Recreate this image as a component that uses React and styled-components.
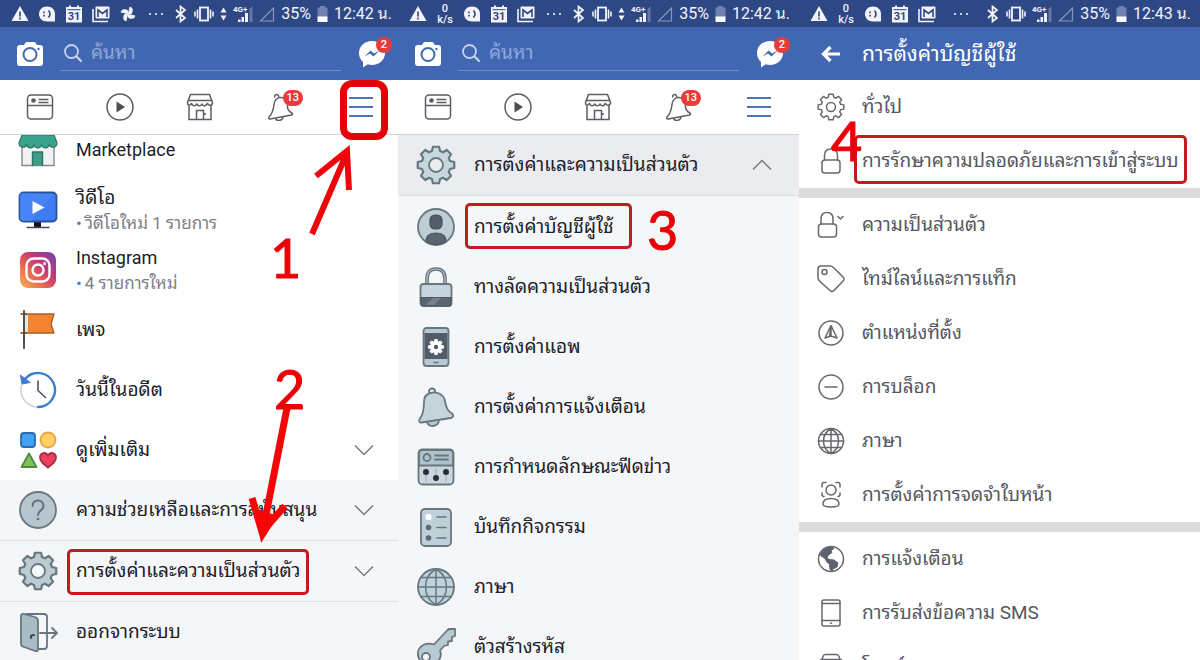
import React from 'react';
import styled, { createGlobalStyle } from 'styled-components';

const GlobalStyle = createGlobalStyle`
  * {
    box-sizing: border-box;
  }

  body {
    margin: 0;
    background: #fff;
    font-family: Roboto, "Noto Sans Thai Looped", "Noto Looped Thai", Loma, Waree, Garuda, "Noto Sans Thai", sans-serif;
  }

  button, input {
    font-family: inherit;
  }
`;

const Stage = styled.main`
  display: flex;
  height: 100vh;
  overflow: hidden;
`;

const Screen = styled.section`
  position: relative;
  flex: 1 1 0;
  min-width: 0;
  overflow: hidden;
  background: ${(props) => props.$background || '#fff'};

  &:first-child {
    margin-right: -3px; /* the second screen overlaps the first */
  }
`;

const StatusBar = styled.div`
  display: flex;
  align-items: center;
  height: 27px;
  padding: 0 9px 0 11px;
  background: #2e4785;
  color: #f2f4fa;
  font-size: 16px;
  line-height: 20px;
  white-space: nowrap;
`;

const StatusGroup = styled.div`
  display: flex;
  align-items: center;
  gap: ${(props) => props.$gap}px;
  margin-left: ${(props) => (props.$end ? 'auto' : '0')};

  svg {
    flex: none;
  }
`;

const Speed = styled.span`
  width: 18px;
  text-align: center;
  font-size: 11px;
  font-weight: 500;
  line-height: 11px;
`;

const Header = styled.header`
  display: flex;
  align-items: center;
  gap: 16px;
  height: 53px;
  padding: 0 14px 0 16px;
  background: #4267b2;
`;

const IconButton = styled.button`
  position: relative;
  display: flex;
  align-items: center;
  justify-content: center;
  padding: 0;
  border: 0;
  background: none;
  cursor: pointer;
`;

const SearchBox = styled.label`
  display: flex;
  flex: 1;
  align-items: center;
  gap: 8px;
  min-width: 0;
  height: 34px;
  padding-left: 3px;
  border-bottom: 1px solid #6f8ccb;
`;

const SearchInput = styled.input`
  flex: 1;
  min-width: 0;
  padding: 0;
  border: 0;
  outline: 0;
  background: none;
  color: #fff;
  font-size: 19px;
  line-height: 28px;

  &::placeholder {
    color: #8fa7dc;
    opacity: 1;
  }
`;

const Title = styled.h1`
  margin: 0;
  color: #fff;
  font-size: 21px;
  font-weight: 400;
  line-height: 32px;
  white-space: nowrap;
`;

const TitleHeader = styled(Header)`
  display: grid;
  grid-template-columns: 63px 1fr;
  gap: 0;
  padding: 0;
`;

const Badge = styled.span`
  position: absolute;
  top: ${(props) => props.$top}px;
  left: ${(props) => props.$left}px;
  min-width: 16px;
  height: 16px;
  padding: 0 4px;
  border-radius: 8px;
  background: #ea3b3b;
  color: #fff;
  font-size: 11px;
  font-weight: 500;
  line-height: 16px;
  text-align: center;
`;

const Tabs = styled.nav`
  position: relative;
  z-index: 1;
  display: grid;
  grid-template-columns: repeat(5, 1fr);
  height: 55px;
  border-bottom: 1px solid #cfd1d6;
  background: #fff;
`;

const List = styled.ul`
  margin: 0;
  padding: 0;
  list-style: none;
`;

/* scrolled so that the first entry slides under the tab bar */
const ScrolledList = styled(List)`
  margin-top: -15px;
`;

const SubList = styled(List)`
  padding-top: 1px;
`;

const MenuRow = styled.button`
  display: grid;
  grid-template-columns: 76px 1fr 74px;
  align-items: center;
  width: 100%;
  height: ${(props) => (props.$lined ? '61px' : '60px')};
  padding: 0;
  border: 0;
  border-bottom: ${(props) => (props.$lined ? '1px solid #dfe0e3' : '0')};
  background: ${(props) => props.$background || 'transparent'};
  color: #1d2129;
  font-size: ${(props) => (props.$latin ? '18px' : '19px')};
  line-height: 26px;
  text-align: left;
  white-space: nowrap;
  cursor: pointer;

  > svg {
    justify-self: center;
  }
`;

const Note = styled.span`
  display: block;
  color: #7d8087;
  font-size: 17px;
  line-height: 24px;

  &::before {
    content: '•';
    margin-right: 3px;
    color: #3f7fc6;
  }
`;

const SettingRow = styled.button`
  display: grid;
  grid-template-columns: 63px 1fr;
  align-items: center;
  width: 100%;
  height: 54px;
  padding: 0;
  border: 0;
  background: none;
  color: #55585f;
  font-size: 19px;
  line-height: 26px;
  text-align: left;
  white-space: nowrap;
  cursor: pointer;

  > svg {
    justify-self: center;
  }
`;

const Separator = styled.div`
  height: 10px;
  background: #dcdcde;
`;

/* tutorial marks, drawn over the screens */
const Frame = styled.div`
  position: absolute;
  z-index: 2;
  left: ${(props) => props.$x}px;
  top: ${(props) => props.$y}px;
  width: ${(props) => props.$w}px;
  height: ${(props) => props.$h}px;
  border: ${(props) => (props.$bold ? '7px solid #e60008' : '3px solid #c31c20')};
  border-radius: ${(props) => (props.$bold ? '12px' : '5px')};
  pointer-events: none;
`;

const Step = styled.span`
  position: absolute;
  z-index: 2;
  left: ${(props) => props.$x}px;
  top: ${(props) => props.$y}px;
  color: #ec0006;
  font-family: Lato, sans-serif;
  font-size: 54px;
  line-height: 60px;
  -webkit-text-stroke: 1px #ec0006;
  pointer-events: none;
`;

const Arrow = styled.svg`
  position: absolute;
  z-index: 2;
  left: ${(props) => props.$x}px;
  top: ${(props) => props.$y}px;
  pointer-events: none;
`;

const gear = (c, outer, inner, teeth = 8) => {
  const half = Math.PI / teeth;
  const points = [];
  for (let i = 0; i < teeth; i += 1) {
    const a = i * 2 * half - Math.PI / 2;
    [[inner, -0.72], [outer, -0.42], [outer, 0.42], [inner, 0.72]].forEach(([r, k]) => {
      points.push(`${(c + r * Math.cos(a + k * half)).toFixed(2)},${(c + r * Math.sin(a + k * half)).toFixed(2)}`);
    });
  }
  return points.join(' ');
};

// Filled icons of the menu, 40 x 40
const MenuIcon = ({ children }) => (
  <svg width="40" height="40" viewBox="0 0 40 40" fill="none" stroke="#66777f" strokeWidth="1.8" strokeLinecap="round" strokeLinejoin="round" aria-hidden="true">
    {children}
  </svg>
);

// Outlined icons of the settings list, 28 x 28
const LineIcon = ({ children }) => (
  <svg width="28" height="28" viewBox="0 0 28 28" fill="none" stroke="#66686e" strokeWidth="1.5" strokeLinecap="round" strokeLinejoin="round" aria-hidden="true">
    {children}
  </svg>
);

const StoreIcon = () => (
  <MenuIcon>
    <path d="M4 17v18.500h32V17" fill="#f0f2f4" stroke="#87888c" strokeWidth="1.400" />
    <path d="M14.500 35.500V22h10v13.500" fill="#3f9c88" stroke="#277565" strokeWidth="1.400" />
    <path d="M4 5h32l3 8c0 5-6.500 5.500-7.500 1.500-1.500 4.500-7 4.500-7.800 0-1.200 4.500-6.700 4.500-7.500 0-1 4.500-6.500 4.500-7.700 0C7.500 18.500 1 18 1 13z" fill="#3aa48b" stroke="#2c7767" strokeWidth="1.200" />
  </MenuIcon>
);

const TvIcon = () => (
  <MenuIcon>
    <path d="M16 31h7v6h-7z" fill="#111" stroke="none" />
    <path d="M9 37.500h22" stroke="#444b57" strokeWidth="1.400" />
    <rect x="1.500" y="2.500" width="37" height="29" rx="4" fill="#3d7cf3" stroke="#28539c" />
    <path d="M35 4L13 31H5q-3 0-3-3V6q0-3 3-3z" fill="#4f8bf8" stroke="none" opacity=".6" />
    <path d="M14.500 11l12 6.500-12 6.500z" fill="#fff" stroke="none" />
  </MenuIcon>
);

const InstagramIcon = () => (
  <MenuIcon>
    <defs>
      <linearGradient id="instagram" x1="0" y1="1" x2="1" y2="0">
        <stop offset="0" stopColor="#f6b65b" />
        <stop offset=".35" stopColor="#e9694c" />
        <stop offset=".6" stopColor="#c83a78" />
        <stop offset="1" stopColor="#6f42ae" />
      </linearGradient>
    </defs>
    <rect x="2" y="2" width="36" height="36" rx="8" fill="url(#instagram)" stroke="none" />
    <rect x="8.500" y="8.500" width="23" height="23" rx="7" stroke="#fff" strokeWidth="2.400" />
    <circle cx="20" cy="20" r="5.500" stroke="#fff" strokeWidth="2.400" />
    <circle cx="26.500" cy="13.500" r="1.500" fill="#fff" stroke="none" />
  </MenuIcon>
);

const FlagIcon = () => (
  <MenuIcon>
    <path d="M6 4h30l-3 10 3 9H6z" fill="#f48432" stroke="#a8622b" strokeWidth="1.400" />
    <path d="M6 5h4v17H6z" fill="#e8e4e1" stroke="none" />
    <path d="M6 1v37" stroke="#55504e" strokeWidth="2" />
    <path d="M3 4h5M3 23h5" stroke="#6b4a30" strokeWidth="1.600" />
  </MenuIcon>
);

const ClockIcon = () => (
  <MenuIcon>
    <circle cx="20" cy="20" r="17" fill="#fff" stroke="#ccd2da" strokeWidth="1.600" />
    <path d="M7 9a17 17 0 1 1 13 28" stroke="#3f7dd0" strokeWidth="2.400" />
    <path d="M2.500 5.500L4 14l8-1.500z" fill="#3f7dd0" stroke="#3f7dd0" strokeWidth="1" />
    <path d="M20 11v9.500l7.500 7" stroke="#4e5560" strokeWidth="1.600" />
  </MenuIcon>
);

const ShapesIcon = () => (
  <MenuIcon>
    <rect x="3" y="3" width="14" height="14" rx="3" fill="#43a1f5" stroke="#2b6baa" />
    <circle cx="30" cy="10" r="7.500" fill="#ffd063" stroke="#e8a646" />
    <path d="M11 23.500L18.500 37h-15z" fill="#7fc15c" stroke="#4e8a3c" />
    <path d="M30 37.500c-5-4-8-6.500-8-10 0-5 6-6 8-2 2-4 8-3 8 2 0 3.500-3 6-8 10z" fill="#f0405f" stroke="#a72d48" />
  </MenuIcon>
);

const HelpIcon = () => (
  <MenuIcon>
    <circle cx="20" cy="20" r="18" fill="#b7c6ce" />
    <path d="M14.500 16c0-7.500 11-7.500 11 0 0 4.500-5.500 4-5.500 9" stroke="#5f7079" strokeWidth="2" />
    <circle cx="20" cy="29" r="1.300" fill="#5f7079" stroke="none" />
  </MenuIcon>
);

const GearIcon = ({ light }) => (
  <MenuIcon>
    <polygon points={gear(20, 18.5, 14.5)} fill={light ? '#c7d8dc' : '#bccad2'} strokeWidth="2.200" />
    <circle cx="20" cy="20" r="7" fill={light ? '#ebecf0' : '#f5f6f7'} />
  </MenuIcon>
);

const DoorIcon = () => (
  <MenuIcon>
    <path d="M8 2h18q3 0 3 3v29q0 3-3 3H16" />
    <path d="M3 4q0-2.500 3-2l11 3q3 1 3 4v28q0 3-3 2L6 35q-3-1-3-3z" fill="#a9bbc5" />
    <path d="M22 21h17M34 16l5 5-5 5" />
    <path d="M13 26q-1-3 3-3" stroke="#39434a" strokeWidth="2" />
  </MenuIcon>
);

const AccountIcon = () => (
  <MenuIcon>
    <circle cx="20" cy="20" r="18" fill="#bccdd4" />
    <path d="M10 34.500c0-6 4-8.500 10-8.500s10 2.500 10 8.500a18 18 0 0 1-20 0z" fill="#5b6470" stroke="#4d5863" strokeWidth="1.200" />
    <rect x="14" y="8" width="12" height="14" rx="5" fill="#545e69" stroke="#424e58" strokeWidth="1.200" />
  </MenuIcon>
);

const PadlockIcon = () => (
  <MenuIcon>
    <path d="M11 18v-6q0-10 9-10t9 10v6" stroke="#5f7079" strokeWidth="3.600" />
    <path d="M11 18v-6q0-10 9-10t9 10v6" stroke="#b9c7cf" strokeWidth="1.200" />
    <rect x="4.500" y="17" width="31" height="22" rx="3" fill="#c7d3dd" />
    <path d="M5 30.500h30V36q0 3-3 3H8q-3 0-3-3z" fill="#5b6470" stroke="#4d5863" strokeWidth="1.200" />
    <path d="M17 31h8l-7 7h-8z" fill="#77818c" stroke="none" />
  </MenuIcon>
);

const AppIcon = () => (
  <MenuIcon>
    <rect x="7.500" y="1" width="25" height="38" rx="3" fill="#b9c9d2" />
    <path d="M8.500 6h23v26h-23z" fill="#535d69" stroke="none" />
    <polygon points={gear(20, 7.5, 5.6)} fill="#fff" stroke="#fff" strokeWidth="1" />
    <circle cx="20" cy="20" r="2.200" fill="#535d69" stroke="none" />
    <path d="M18 35.500h4" strokeWidth="1.500" />
  </MenuIcon>
);

const BellIcon = () => (
  <MenuIcon>
    <circle cx="16" cy="4.500" r="3" />
    <path d="M11 34.500c0 6.500 12 6 12-1.500" fill="#b9c9d2" />
    <path d="M8 15C8 8 12 6 17 5.500s11 2.500 12 8.500c1.200 7 2.500 10 7 12.500 2 1.200 1.500 4-1 4.500L5.500 35.500C3 36 2.500 33.500 4 31.500 7.500 27 8 22 8 15z" fill="#c5d3da" />
  </MenuIcon>
);

const FeedIcon = () => (
  <MenuIcon>
    <rect x="2.500" y="2.500" width="35" height="35" rx="4" fill="#cbd6dd" />
    <path d="M3 18.500V6q0-3 3-3h28q3 0 3 3v12.500z" fill="#b0c1ca" />
    <circle cx="11" cy="10.500" r="3.500" />
    <path d="M19 8.500h13M19 12.500h13" />
    <path d="M10 22v12M20 22v12M30 22v12" stroke="#93a3ac" strokeWidth="1" />
    <g fill="#262f38" stroke="none">
      <circle cx="10" cy="25" r="3" />
      <circle cx="20" cy="31" r="3" />
      <circle cx="30" cy="25" r="3" />
    </g>
  </MenuIcon>
);

const LogIcon = () => (
  <MenuIcon>
    <rect x="5" y="2" width="30" height="37" rx="4" fill="#c0d0d8" />
    <rect x="9.500" y="7" width="6" height="6" rx="2" fill="#fff" stroke="none" />
    <circle cx="12.500" cy="20.500" r="2.800" fill="#5b6b75" stroke="none" />
    <circle cx="12.500" cy="31" r="2.800" fill="#5b6b75" stroke="none" />
    <path d="M21 10h9M21 20.500h9M21 31h9" strokeWidth="1.600" />
  </MenuIcon>
);

const GlobeIcon = () => (
  <MenuIcon>
    <circle cx="20" cy="20" r="18" fill="#bfd2da" />
    <path d="M20 2v36M2 20h36M5 10.500h30M5 29.500h30M20 2c-14 8-14 28 0 36M20 2c14 8 14 28 0 36" strokeWidth="1.500" />
  </MenuIcon>
);

const KeyIcon = () => (
  <MenuIcon>
    <path d="M18 17.500L31.500 3q1-1 2.500-1h5v7l-3 1v4l-4 .5v3.500l-4 1-4 4.500c3 8-3 14-10 14C5 37.500 1 31 2 25s8-10 16-7.500z" fill="#b9c9d2" />
    <circle cx="10" cy="30" r="4" fill="#f5f6f7" />
  </MenuIcon>
);

const Chevron = ({ up }) => (
  <svg width="20" height="12" viewBox="0 0 20 12" fill="none" stroke="#777b83" strokeWidth="1.5" aria-hidden="true">
    <path d={up ? 'M1 10.500l9-9 9 9' : 'M1 1.500l9 9 9-9'} />
  </svg>
);

const LineGear = () => (
  <LineIcon>
    <polygon points={gear(14, 13, 10)} />
    <circle cx="14" cy="14" r="4.500" />
  </LineIcon>
);

const LineLock = () => (
  <LineIcon>
    <path d="M7.500 13V8.500C7.500 4 10 2 14 2s6.500 2 6.500 6.500V13" />
    <rect x="5" y="13" width="18" height="13" rx="3" />
  </LineIcon>
);

const LinePrivacy = () => (
  <LineIcon>
    <path d="M4 13V8c0-4 2-6.500 6-6.500S16 4 16 8v5" />
    <rect x="1.500" y="13" width="18" height="13" rx="3" />
    <path d="M21 5.500l2.500 2.500L26 5.500" />
  </LineIcon>
);

const LineTag = () => (
  <LineIcon>
    <path d="M1 4q0-3 3-3h9q2 0 3.500 1.500L26 12q2 2 0 4L17 25.500q-2 2-4 0L2.500 16Q1 14.500 1 12.500z" />
    <circle cx="7.500" cy="7" r="2.500" />
  </LineIcon>
);

const LineLocation = () => (
  <LineIcon>
    <circle cx="14" cy="14" r="12" />
    <path d="M14 6.500l6 12.500-6-2-6 2zM14 6.500V17M12.500 16.500l1.500-8" />
  </LineIcon>
);

const LineBlock = () => (
  <LineIcon>
    <circle cx="14" cy="14" r="12" />
    <path d="M8 14h12" />
  </LineIcon>
);

const LineGlobe = () => (
  <LineIcon>
    <circle cx="14" cy="14" r="12.500" />
    <path d="M14 1.500v25M1.500 14h25M3.500 7.500h21M3.500 20.500h21M14 1.500C4 7 4 21 14 26.500M14 1.500c10 5.500 10 19.500 0 25" />
  </LineIcon>
);

const LineFace = () => (
  <LineIcon>
    <path d="M5 6V3.500Q5 1.500 7 1.500h2M19 1.500h2q2 0 2 2V6M5 12v1.500q0 2 2 2M23 12v1.500q0 2-2 2" />
    <circle cx="14" cy="9" r="5" />
    <path d="M6 23c0-4 3-5.500 8-5.500s8 1.500 8 5.500c0 4-16 4-16 0z" />
  </LineIcon>
);

const LineEarth = () => (
  <LineIcon>
    <circle cx="14" cy="14" r="12.500" />
    <path d="M7 4l8-2.500 2 2-3 2 1 2-4 3-1 3 3 1 4 .5 4 3-1 4-4 2-1 2.500-2-2-.5-5-3-3-1.500-3-4-2.500-1-2z" fill="#5d616d" strokeWidth="1" />
  </LineIcon>
);

const LinePhone = () => (
  <LineIcon>
    <rect x="5" y="1" width="18" height="26" rx="2" />
    <path d="M5 4.500h18M5 21.500h18M13.500 24.200h1" />
  </LineIcon>
);

const LinePosts = () => (
  <LineIcon>
    <rect x="2.500" y="6.500" width="23" height="19" rx="3" fill="#dfe2ea" />
    <path d="M5 6.500l1-3Q6.500 1.500 8.500 1.500h11q2 0 2.500 2l1 3" />
  </LineIcon>
);

// Icons of the phone's own status bar
const StatusIcon = ({ children }) => (
  <svg width="18" height="18" viewBox="0 0 18 18" fill="#f2f4fa" aria-hidden="true">
    {children}
  </svg>
);

const WarningIcon = () => (
  <StatusIcon>
    <path d="M9 1l8.500 15H.5z" />
    <path d="M9 6.500v5M9 12.500v2" stroke="#2e4785" strokeWidth="1.600" />
  </StatusIcon>
);

const ChatIcon = () => (
  <StatusIcon>
    <path d="M9 1.500c5 0 8 3.300 8 7.500v7.500H9C4 16.500 1 13 1 9s3-7.500 8-7.500z" />
    <path d="M6 6.500v1.800M6 9.700v1.800M10.500 5.500q3 3.500 0 7" stroke="#2e4785" strokeWidth="1.600" fill="none" />
  </StatusIcon>
);

const CalendarIcon = () => (
  <StatusIcon>
    <path d="M1 2h3V.500h2V2h6V.500h2V2h3v15.500H1z" />
    <path d="M2.500 4.700h13" stroke="#2e4785" strokeWidth="1" />
    <text x="9" y="15" fill="#2e4785" fontSize="11" fontWeight="700" textAnchor="middle">31</text>
  </StatusIcon>
);

const MailIcon = () => (
  <StatusIcon>
    <path d="M1 4v12.500h15" fill="none" stroke="#f2f4fa" strokeWidth="1.600" />
    <rect x="3.500" y="1.500" width="14" height="12" rx="1" />
    <path d="M6 12V5l4.500 3.500L15 5v7" fill="none" stroke="#2e4785" strokeWidth="1.600" />
  </StatusIcon>
);

const PhotosIcon = () => (
  <StatusIcon>
    {[0, 90, 180, 270].map((angle) => (
      <path key={angle} d="M9 9.500V1.500a4 4 0 0 1 0 8z" transform={`rotate(${angle + 12} 9 9)`} />
    ))}
  </StatusIcon>
);

const DotsIcon = () => (
  <StatusIcon>
    <circle cx="3" cy="9" r="1.100" />
    <circle cx="9" cy="9" r="1.100" />
    <circle cx="15" cy="9" r="1.100" />
  </StatusIcon>
);

const BluetoothIcon = () => (
  <svg width="14" height="18" viewBox="0 0 14 18" fill="none" stroke="#f2f4fa" strokeWidth="1.7" aria-hidden="true">
    <path d="M2 5l9 8-4.500 3.500v-15L11 5l-9 8" />
  </svg>
);

const VibrateIcon = () => (
  <svg width="20" height="18" viewBox="0 0 20 18" fill="none" stroke="#f2f4fa" strokeWidth="1.8" aria-hidden="true">
    <rect x="6" y="2.500" width="8" height="13" />
    <path d="M3.500 4.500v9M16.500 4.500v9M1 6.500v5M19 6.500v5" strokeWidth="1.600" />
  </svg>
);

const DataIcon = () => (
  <svg width="7" height="18" viewBox="0 0 7 18" fill="#f2f4fa" aria-hidden="true">
    <path d="M3.500 2.500l3 5h-6zM3.500 15.500l3-5h-6z" />
  </svg>
);

const SignalIcon = () => (
  <svg width="20" height="18" viewBox="0 0 20 18" fill="#f2f4fa" aria-hidden="true">
    <path d="M19.500 1v16h-3V4z" fill="#6378a8" />
    <path d="M5 17v-2.500h2.500V17zM8.500 17v-5H11v5zM12 17V8h3v9z" />
    <text x="0" y="6.500" fontSize="8" fontWeight="700">4G+</text>
  </svg>
);

const NoSignalIcon = () => (
  <svg width="16" height="18" viewBox="0 0 16 18" fill="none" stroke="#8595bb" strokeWidth="1.2" aria-hidden="true">
    <path d="M14.500 3v13H1.500z" />
  </svg>
);

const BatteryIcon = () => (
  <svg width="11" height="18" viewBox="0 0 11 18" aria-hidden="true">
    <path d="M3 1h5v1.500h2.500V12H.5V2.500H3z" fill="#6f82b0" />
    <path d="M.5 11.500h10V17H.5z" fill="#fff" />
  </svg>
);

const CameraIcon = () => (
  <svg width="28" height="26" viewBox="0 0 28 26" aria-hidden="true">
    <path d="M4 4h4l1.500-2.500Q10 1 11 1h7q1 0 1.500.7L21 4h3q3 0 3 3v15q0 3-3 3H4q-3 0-3-3V7q0-3 3-3z" fill="#fff" />
    <circle cx="14" cy="13.500" r="6.500" fill="none" stroke="#4267b2" strokeWidth="2" />
    <circle cx="22.500" cy="8" r="1.200" fill="#4267b2" />
  </svg>
);

const SearchIcon = () => (
  <svg width="20" height="20" viewBox="0 0 20 20" fill="none" stroke="#c4d1ef" strokeWidth="1.8" strokeLinecap="round" aria-hidden="true">
    <circle cx="8.500" cy="8.500" r="6.500" />
    <path d="M13.500 13.500L18 18" strokeWidth="2.400" />
  </svg>
);

const MessengerIcon = () => (
  <svg width="30" height="30" viewBox="0 0 30 30" aria-hidden="true">
    <path d="M15 2C7.500 2 2 7.300 2 14c0 3.700 1.500 6.700 4 9v5.500l4.800-3.200c1.300.4 2.700.7 4.200.7 7.500 0 13-5.300 13-12S22.500 2 15 2z" fill="#fff" />
    <path d="M7.500 17.500l6-6 3.500 3 5.500-3-6 6-3.500-3z" fill="#4267b2" />
  </svg>
);

const BackIcon = () => (
  <svg width="22" height="18" viewBox="0 0 22 18" fill="none" stroke="#fff" strokeWidth="3.2" aria-hidden="true">
    <path d="M20 9H4M10.500 2L3.500 9l7 7" />
  </svg>
);

const tabIcons = {
  'ฟีดข่าว': (
    <>
      <rect x="1.500" y="2" width="25" height="24" rx="3.500" />
      <path d="M1.500 12.500h25M12.500 6.500h10M12.500 9.500h10" />
      <circle cx="7.500" cy="7.500" r="1.600" fill="#4b4d52" />
    </>
  ),
  'วิดีโอ': (
    <>
      <circle cx="14" cy="14" r="13" />
      <path d="M10.500 8.500l8.500 5.500-8.500 5.500z" fill="#4b4d52" stroke="none" />
    </>
  ),
  Marketplace: (
    <>
      <path d="M4.500 1.500h19l3 8c0 3.500-4.500 3.500-5 .5-1 3.500-5 3.500-5.500.5-.5 3-4.500 3-5.500 0-.5 3-4.500 3-5-.5-1 3-4 3-4-.5zM3 7.500h22M3 12v14.500h22V12" />
      <path d="M10.500 26.500v-9h7v9M19 20v2" />
    </>
  ),
  'การแจ้งเตือน': (
    <>
      <path d="M7 11.500c.5-5 3.500-7.500 7.500-7 4.500.6 6.500 3.500 6 8-.4 3.500.5 5.500 4.500 7.500 1 .6.500 2-.5 2L3 26c-1.200.2-1.700-1-1-2 4-4 4.500-8 5-12.500z" />
      <path d="M8 4.500C6.500 1.500 11 0 12 4M8.500 25.500c1 3 7 2.500 7.500-1.500" />
    </>
  ),
};

const TabBar = () => (
  <Tabs>
    {Object.entries(tabIcons).map(([name, drawing]) => (
      <IconButton key={name} aria-label={name}>
        <svg width="28" height="28" viewBox="0 0 28 28" fill="none" stroke="#5c5e63" strokeWidth="1.5" aria-hidden="true">
          {drawing}
        </svg>
        {name === 'การแจ้งเตือน' && <Badge $top={10} $left={42}>13</Badge>}
      </IconButton>
    ))}
    <IconButton aria-label="เมนู">
      <svg width="26" height="24" viewBox="0 0 26 24" stroke="#4a76b8" strokeWidth="2" aria-hidden="true">
        <path d="M1 3h24M1 12h24M1 21h24" />
      </svg>
    </IconButton>
  </Tabs>
);

const PhoneStatus = ({ time, photos, data }) => (
  <StatusBar>
    <StatusGroup $gap={9}>
      <WarningIcon />
      {!photos && <Speed>0<br />k/s</Speed>}
      <ChatIcon />
      <CalendarIcon />
      <MailIcon />
      {photos && <PhotosIcon />}
    </StatusGroup>
    <StatusGroup $gap={5} $end>
      <DotsIcon />
    </StatusGroup>
    <StatusGroup $gap={6} $end>
      <BluetoothIcon />
      <VibrateIcon />
      {data && <DataIcon />}
      <SignalIcon />
      <NoSignalIcon />
      <span>35%</span>
      <BatteryIcon />
      <span>{time} น.</span>
    </StatusGroup>
  </StatusBar>
);

const SearchHeader = () => (
  <Header>
    <IconButton aria-label="กล้อง"><CameraIcon /></IconButton>
    <SearchBox>
      <SearchIcon />
      <SearchInput type="text" placeholder="ค้นหา" aria-label="ค้นหา" />
    </SearchBox>
    <IconButton aria-label="Messenger">
      <MessengerIcon />
      <Badge $top={-2} $left={19}>2</Badge>
    </IconButton>
  </Header>
);

const mainMenu = [
  { icon: StoreIcon, label: 'Marketplace', latin: true },
  { icon: TvIcon, label: 'วิดีโอ', note: 'วิดีโอใหม่ 1 รายการ' },
  { icon: InstagramIcon, label: 'Instagram', note: '4 รายการใหม่', latin: true },
  { icon: FlagIcon, label: 'เพจ' },
  { icon: ClockIcon, label: 'วันนี้ในอดีต' },
  { icon: ShapesIcon, label: 'ดูเพิ่มเติม', more: true },
];

const helpMenu = [
  { icon: HelpIcon, label: 'ความช่วยเหลือและการสนับสนุน', more: true },
  { icon: GearIcon, label: 'การตั้งค่าและความเป็นส่วนตัว', more: true },
  { icon: DoorIcon, label: 'ออกจากระบบ' },
];

const privacyMenu = [
  { icon: AccountIcon, label: 'การตั้งค่าบัญชีผู้ใช้' },
  { icon: PadlockIcon, label: 'ทางลัดความเป็นส่วนตัว' },
  { icon: AppIcon, label: 'การตั้งค่าแอพ' },
  { icon: BellIcon, label: 'การตั้งค่าการแจ้งเตือน' },
  { icon: FeedIcon, label: 'การกำหนดลักษณะฟีดข่าว' },
  { icon: LogIcon, label: 'บันทึกกิจกรรม' },
  { icon: GlobeIcon, label: 'ภาษา' },
  { icon: KeyIcon, label: 'ตัวสร้างรหัส' },
];

const settingGroups = [
  [
    { icon: LineGear, label: 'ทั่วไป' },
    { icon: LineLock, label: 'การรักษาความปลอดภัยและการเข้าสู่ระบบ' },
  ],
  [
    { icon: LinePrivacy, label: 'ความเป็นส่วนตัว' },
    { icon: LineTag, label: 'ไทม์ไลน์และการแท็ก' },
    { icon: LineLocation, label: 'ตำแหน่งที่ตั้ง' },
    { icon: LineBlock, label: 'การบล็อก' },
    { icon: LineGlobe, label: 'ภาษา' },
    { icon: LineFace, label: 'การตั้งค่าการจดจำใบหน้า' },
  ],
  [
    { icon: LineEarth, label: 'การแจ้งเตือน' },
    { icon: LinePhone, label: 'การรับส่งข้อความ SMS' },
    { icon: LinePosts, label: 'โพสต์สาธารณะ' },
  ],
];

const MenuItem = ({ item, lined, background }) => {
  const Icon = item.icon;
  return (
    <li>
      <MenuRow $lined={lined} $background={background} $latin={item.latin}>
        <Icon />
        <span>
          {item.label}
          {item.note && <Note>{item.note}</Note>}
        </span>
        {item.more && <Chevron />}
      </MenuRow>
    </li>
  );
};

const App = () => (
  <>
    <GlobalStyle />
    <Stage>
      <Screen>
        <PhoneStatus time="12:42" photos data />
        <SearchHeader />
        <TabBar />
        <ScrolledList>
          {mainMenu.map((item) => <MenuItem key={item.label} item={item} />)}
          {helpMenu.map((item) => <MenuItem key={item.label} item={item} lined background="#f5f6f7" />)}
        </ScrolledList>
        <Frame $x={340} $y={80} $w={48} $h={60} $bold />
        <Frame $x={67} $y={549} $w={242} $h={46} />
        <Step $x={270} $y={228}>1</Step>
        <Step $x={274} $y={359}>2</Step>
        <Arrow $x={305} $y={140} width="55" height="100" viewBox="305 140 55 100" fill="none" stroke="#ee0509" strokeWidth="6">
          <path d="M312 234L346 155M316 176L347 151L349 190" />
        </Arrow>
        <Arrow $x={245} $y={405} width="50" height="140" viewBox="245 405 50 140" fill="none" stroke="#f50505" strokeWidth="7">
          <path d="M287 408L264 525M252 498L262 532L285 506" />
          <path d="M255 508l6 35 17-27z" fill="#f50505" stroke="none" />
        </Arrow>
      </Screen>

      <Screen $background="#f5f6f7">
        <PhoneStatus time="12:42" data />
        <SearchHeader />
        <TabBar />
        <MenuRow $lined $background="#ebecf0" aria-expanded="true">
          <GearIcon light />
          <span>การตั้งค่าและความเป็นส่วนตัว</span>
          <Chevron up />
        </MenuRow>
        <SubList>
          {privacyMenu.map((item) => <MenuItem key={item.label} item={item} />)}
        </SubList>
        <Frame $x={67} $y={203} $w={167} $h={46} />
        <Step $x={249} $y={200}>3</Step>
      </Screen>

      <Screen>
        <PhoneStatus time="12:43" />
        <TitleHeader>
          <IconButton aria-label="กลับ"><BackIcon /></IconButton>
          <Title>การตั้งค่าบัญชีผู้ใช้</Title>
        </TitleHeader>
        {settingGroups.map((group, index) => (
          <React.Fragment key={group[0].label}>
            {index > 0 && <Separator />}
            <List>
              {group.map(({ icon: Icon, label }) => (
                <li key={label}>
                  <SettingRow>
                    <Icon />
                    <span>{label}</span>
                  </SettingRow>
                </li>
              ))}
            </List>
          </React.Fragment>
        ))}
        <Frame $x={55} $y={135} $w={333} $h={49} />
        <Step $x={32} $y={111}>4</Step>
      </Screen>
    </Stage>
  </>
);

export default App;
